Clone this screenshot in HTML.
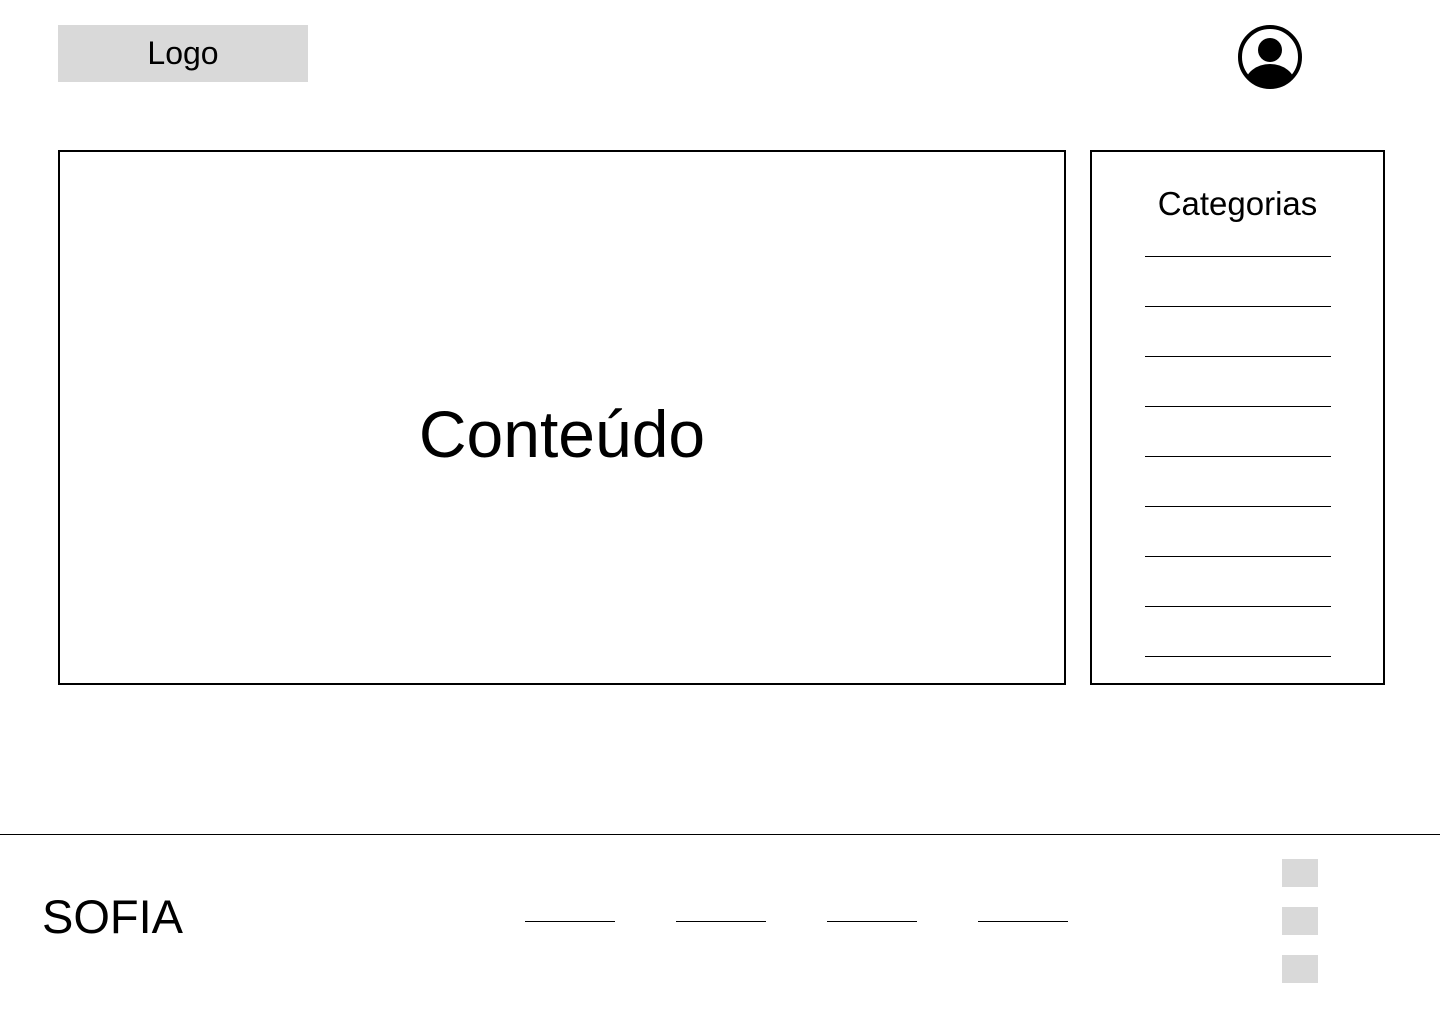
<!DOCTYPE html>
<html><head><meta charset="utf-8"><style>
body{margin:0;width:1440px;height:1024px;background:#fff;position:relative;overflow:hidden;font-family:"Liberation Sans",sans-serif;color:#000}
.a{position:absolute}
.ln{position:absolute;height:1px;background:#000}
.sq{position:absolute;left:1282px;width:36px;height:28px;background:#d9d9d9}
</style></head><body>
<div class="a" style="left:58px;top:25px;width:250px;height:57px;background:#d9d9d9;font-size:32px;line-height:57px;text-align:center">Logo</div>
<svg class="a" style="left:1230px;top:17px" width="80" height="80" viewBox="0 0 80 80">
<defs><clipPath id="c"><circle cx="40" cy="40" r="31"/></clipPath></defs>
<circle cx="40" cy="40" r="30" fill="none" stroke="#000" stroke-width="4"/>
<circle cx="40" cy="33" r="12" fill="#000"/>
<ellipse cx="40" cy="67" rx="25" ry="20" fill="#000" clip-path="url(#c)"/>
</svg>
<div class="a" style="left:58px;top:150px;width:1004px;height:531px;border:2px solid #000"></div>
<div class="a" style="left:58px;top:394px;width:1008px;text-align:center;font-size:66px;line-height:80px">Conteúdo</div>
<div class="a" style="left:1090px;top:184px;width:295px;text-align:center;font-size:33px;line-height:40px">Categorias</div>
<div class="a" style="left:1090px;top:150px;width:291px;height:531px;border:2px solid #000"></div>
<div class="ln" style="left:1145px;width:186px;top:256px"></div>
<div class="ln" style="left:1145px;width:186px;top:306px"></div>
<div class="ln" style="left:1145px;width:186px;top:356px"></div>
<div class="ln" style="left:1145px;width:186px;top:406px"></div>
<div class="ln" style="left:1145px;width:186px;top:456px"></div>
<div class="ln" style="left:1145px;width:186px;top:506px"></div>
<div class="ln" style="left:1145px;width:186px;top:556px"></div>
<div class="ln" style="left:1145px;width:186px;top:606px"></div>
<div class="ln" style="left:1145px;width:186px;top:656px"></div>
<div class="ln" style="left:0;width:1440px;top:834px"></div>
<div class="a" style="left:42px;top:888px;font-size:47px;line-height:58px">SOFIA</div>
<div class="ln" style="left:525px;width:90px;top:921px"></div>
<div class="ln" style="left:676px;width:90px;top:921px"></div>
<div class="ln" style="left:827px;width:90px;top:921px"></div>
<div class="ln" style="left:978px;width:90px;top:921px"></div>
<div class="sq" style="top:859px"></div>
<div class="sq" style="top:907px"></div>
<div class="sq" style="top:955px"></div>
</body></html>
